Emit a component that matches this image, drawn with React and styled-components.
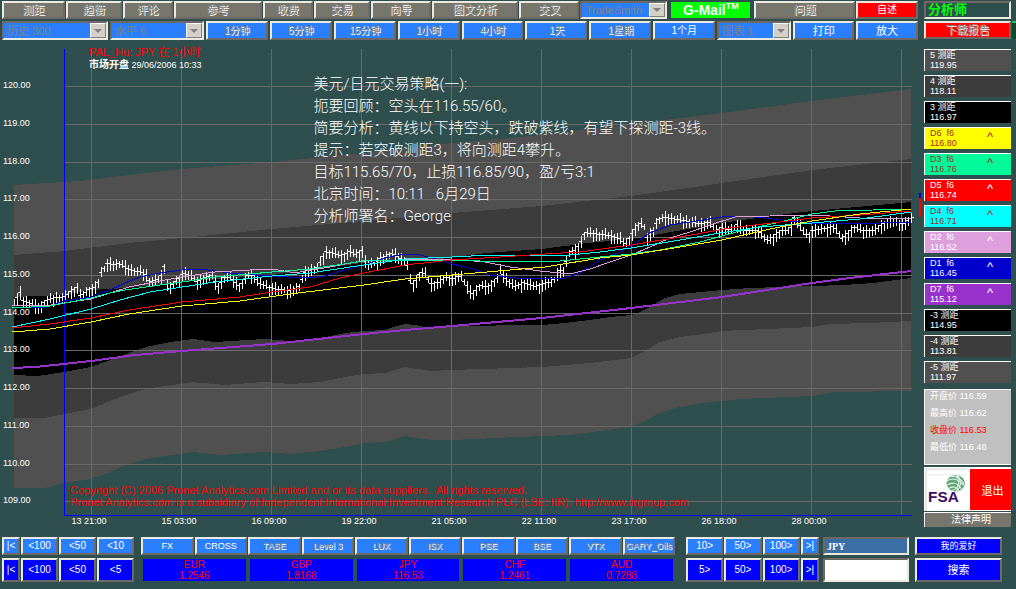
import React from "react";
import styled, { createGlobalStyle, css } from "styled-components";

const TOP_TABS = [
  { label: "测距", size: 63 },
  { label: "趋衡", size: 56 },
  { label: "评论", size: 50 },
  { label: "参考", size: 88 },
  { label: "收费", size: 50 },
  { label: "交易", size: 56 },
  { label: "向导", size: 60 },
  { label: "图文分析", size: 87 },
  { label: "交叉", size: 60 },
];

const PERIODS = [
  "1分钟",
  "5分钟",
  "15分钟",
  "1小时",
  "4小时",
  "1天",
  "1星期",
  "1个月",
];

const LEVELS = [
  { name: "5 测距", value: "119.95", bg: "#505050" },
  { name: "4 测距", value: "118.11", bg: "#3c3c3c" },
  { name: "3 测距", value: "116.97", bg: "#000" },
  { name: "D6  f6", value: "116.80", bg: "#ff0", color: "#a52a2a", up: true },
  { name: "D3  f6", value: "116.76", bg: "#00fa9a", color: "#a52a2a", up: true },
  { name: "D5  f6", value: "116.74", bg: "#f00", up: true },
  { name: "D4  f6", value: "116.71", bg: "#0ff", color: "#a52a2a", up: true },
  { name: "D2  f6", value: "116.52", bg: "#dda0dd", up: true },
  { name: "D1  f6", value: "116.45", bg: "#0000cd", up: true },
  { name: "D7  f6", value: "115.12", bg: "#9932cc", up: true },
  { name: "-3 测距", value: "114.95", bg: "#000" },
  { name: "-4 测距", value: "113.81", bg: "#3c3c3c" },
  { name: "-5 测距", value: "111.97", bg: "#505050" },
];

const PRICES = [
  { name: "开盘价", value: "116.59" },
  { name: "最高价", value: "116.62" },
  { name: "收盘价", value: "116.53", active: true },
  { name: "最低价", value: "116.48" },
];

const MARKETS = [
  { label: "FX" },
  { label: "CROSS" },
  { label: "TASE", off: true },
  { label: "Level 3", off: true },
  { label: "LUX", off: true },
  { label: "ISX", off: true },
  { label: "PSE", off: true },
  { label: "BSE", off: true },
  { label: "VTX", off: true },
  { label: "GARY_Oils", off: true },
];

const QUOTES = [
  { name: "EUR", value: "1.2546" },
  { name: "GBP", value: "1.8168" },
  { name: "JPY", value: "116.53" },
  { name: "CHF", value: "1.2461" },
  { name: "AUD", value: "0.7288" },
];

const COMMENTARY = [
  "美元/日元交易策略(一):",
  "扼要回顾：空头在116.55/60。",
  "简要分析：黄线以下持空头，跌破紫线，有望下探测距-3线。",
  "提示：若突破测距3，将向测距4攀升。",
  "目标115.65/70，止损116.85/90，盈/亏3:1",
  "北京时间：10:11   6月29日",
  "分析师署名：George",
];

const TIMES = [
  "13 21:00",
  "15 03:00",
  "16 09:00",
  "19 22:00",
  "21 05:00",
  "22 11:00",
  "23 17:00",
  "26 18:00",
  "28 00:00",
];

// chart bands, drawn from the widest to the narrowest
const OUTER_BAND =
  "14,185 64,182 90,180 129,175 182,169 272,162 364,153 452,143 542,135 631,124 722,113 812,101 911,89 " +
  "911,391 835,392 812,396 740,399 722,401 700,403 675,408 660,413 645,421 631,427 600,431 570,435 542,436 452,440 430,440 405,436 385,442 364,443 345,447 320,451 290,454 264,452 220,455 193,452 165,456 146,459 129,464 110,472 91,479 64,483 45,488 14,488";
const MIDDLE_BAND =
  "14,255 64,251 129,243 182,238 272,229 364,221 452,213 542,206 631,196 722,183 812,170 911,159 " +
  "911,321 870,323 830,324 812,327 722,331 680,337 660,342 645,351 631,358 590,363 542,367 452,370 430,371 405,367 385,373 364,374 345,377 320,382 290,384 264,382 225,385 193,382 165,386 146,389 129,394 110,401 91,409 64,414 45,418 14,418";
const INNER_BAND =
  "14,297 64,295 91,290 127,288 176,283 182,282 272,275 362,263 440,259 487,253 542,249 565,246 587,243 631,239 660,234 722,223 770,216 812,211 911,202 " +
  "911,278 873,283 843,285 812,286 750,288 722,290 680,294 665,298 650,307 640,312 631,315 610,317 590,320 565,323 542,325 452,326 430,328 415,325 405,324 393,327 385,330 364,331 345,333 320,338 290,341 264,339 215,342 193,339 170,342 146,347 129,353 110,360 91,367 64,372 38,376 14,375";

const AVERAGES = [
  {
    color: "#0000cd",
    points:
      "12,308 45,307 64,301 91,297 110,290 125,283 140,277 160,273 182,270 200,269 215,271 230,273 255,275 290,277 310,278 325,276 345,270 364,265 385,258 405,254 420,255 440,260 452,264 470,268 490,275 515,278 545,279 565,278 580,273 600,260 620,252 631,246 650,233 670,225 690,222 722,217 745,216 765,218 790,221 812,223 840,224 880,223 911,222",
  },
  {
    color: "#dda0dd",
    points:
      "12,305 45,306 64,303 91,299 110,293 129,287 160,281 182,277 215,272 250,270 272,269 290,272 300,272 330,267 361,261 400,260 452,259 485,262 510,267 540,271 570,274 590,269 610,262 631,255 650,247 670,238 690,232 710,225 735,217 770,216 800,215 830,216 860,218 911,218",
  },
  {
    color: "#00fa9a",
    points:
      "12,308 50,306 91,298 110,293 125,290 160,285 182,282 215,277 272,272 310,269 330,266 364,261 400,260 452,260 480,261 560,261 600,257 631,254 660,250 700,242 740,231 780,222 812,214 835,211 911,209",
  },
  {
    color: "#0ff",
    points:
      "12,327 50,319 91,309 120,300 150,292 182,287 215,282 272,276 310,273 364,265 385,262 405,259 452,257 490,255 570,255 600,252 631,248 680,240 720,233 760,227 812,223 860,219 911,212",
  },
  {
    color: "#f00",
    points:
      "12,328 50,324 91,318 129,310 182,302 240,297 272,292 310,287 340,278 364,273 405,265 452,260 500,257 545,254 580,252 631,245 680,237 730,228 780,222 812,218 860,215 911,211",
  },
  {
    color: "#ff0",
    points:
      "12,332 50,329 91,322 129,314 182,306 240,301 290,294 364,285 405,279 452,275 545,267 600,258 631,255 680,247 722,240 770,229 812,221 860,214 911,209",
  },
  {
    color: "#9932cc",
    width: 2,
    points:
      "12,368 35,367 64,364 91,361 135,355 182,351 272,344 364,334 405,330 452,326 542,318 631,308 722,297 812,283 850,278 911,271",
  },
];

const PRICE_PATH = [
  [14, 301], [20, 292], [22, 300], [30, 302], [40, 307], [46, 300], [55, 297],
  [64, 297], [70, 292], [77, 287], [80, 295], [85, 293], [90, 288], [97, 287],
  [100, 273], [108, 262], [115, 265], [118, 262], [125, 266], [133, 270],
  [145, 272], [150, 282], [160, 278], [164, 266], [168, 290], [173, 284],
  [180, 277], [183, 273], [190, 274], [197, 281], [205, 277], [212, 275],
  [218, 286], [225, 276], [232, 278], [240, 286], [248, 275], [254, 275],
  [260, 283], [270, 287], [280, 289], [292, 290], [300, 285], [304, 272],
  [317, 267], [322, 258], [326, 251], [335, 253], [342, 255], [350, 251],
  [357, 254], [362, 250], [366, 265], [375, 262], [382, 257], [393, 253],
  [400, 257], [406, 260], [410, 280], [414, 284], [420, 272], [425, 273],
  [430, 283], [440, 282], [445, 277], [455, 278], [460, 275], [465, 282],
  [472, 294], [480, 285], [490, 286], [497, 278], [500, 270], [505, 277],
  [515, 286], [525, 282], [535, 286], [545, 283], [553, 281], [558, 270],
  [565, 270], [567, 252], [575, 250], [580, 243], [585, 232], [600, 234],
  [612, 235], [620, 238], [626, 243], [632, 233], [638, 225], [643, 222],
  [647, 237], [653, 230], [658, 219], [665, 217], [685, 220], [700, 223],
  [710, 222], [716, 230], [722, 227], [730, 230], [737, 224], [745, 230],
  [760, 230], [765, 238], [770, 240], [775, 235], [782, 230], [790, 230],
  [794, 217], [800, 225], [807, 236], [812, 230], [830, 227], [835, 226],
  [842, 238], [848, 233], [855, 226], [862, 230], [875, 230], [885, 222],
  [895, 222], [905, 223], [912, 217],
];

const priceAt = (x) => {
  const i = PRICE_PATH.findIndex((p) => p[0] >= x);
  if (i <= 0) return PRICE_PATH[0][1];
  const [x0, y0] = PRICE_PATH[i - 1];
  const [x1, y1] = PRICE_PATH[i];
  return y0 + ((y1 - y0) * (x - x0)) / (x1 - x0);
};

// one open-high-low-close bar every three units
const priceBars = () => {
  let d = "";
  for (let i = 0; 14 + i * 3 <= 911; i += 1) {
    const x = 14 + i * 3;
    const y = Math.round(priceAt(x));
    const high = y - 3 - ((i * 7) % 5);
    const low = y + 3 + ((i * 11) % 6);
    const open = y + ((i * 5) % 4) - 2;
    const close = Math.round(priceAt(Math.min(x + 3, 912)));
    d += `M${x} ${high}V${low}M${x - 1} ${open}h1M${x} ${close}h2`;
  }
  return d;
};

const BARS = priceBars();
const gridY = (i) => Math.round(86 + i * 37.77);

function Picker({ label, size, name }) {
  return (
    <PickerBox size={size}>
      <select aria-label={name} disabled defaultValue={label}>
        <option>{label}</option>
      </select>
      <Arrow aria-hidden="true" />
    </PickerBox>
  );
}

function Chart() {
  return (
    <ChartBox>
      <svg viewBox="0 40 922 488" role="img" aria-label="JPY 1小时">
        <g shapeRendering="crispEdges">
          <polygon points={OUTER_BAND} fill="#505050" />
          <polygon points={MIDDLE_BAND} fill="#3c3c3c" />
          <polygon points={INNER_BAND} fill="#000" />
          <g stroke="#696969">
            {Array.from({ length: 12 }, (_, i) => (
              <path key={i} d={`M64 ${gridY(i) + 0.5}H912`} />
            ))}
            {Array.from({ length: 10 }, (_, i) => (
              <path key={i} d={`M${91.5 + i * 90} 49V515`} />
            ))}
          </g>
          <rect x="64" y="49" width="1" height="467" fill="#00f" />
          <rect x="64" y="515" width="848" height="1" fill="#00f" />
        </g>
        <AxisText>
          {Array.from({ length: 12 }, (_, i) => (
            <text key={i} x="3" y={gridY(i) + 2}>
              {`${120 - i}.00`}
            </text>
          ))}
          {TIMES.map((time, i) => (
            <text key={time} x={89 + i * 90} y="524" textAnchor="middle">
              {time}
            </text>
          ))}
        </AxisText>
        <g shapeRendering="crispEdges" fill="none">
          <path d={BARS} stroke="#fff" transform="translate(0.5 0.5)" />
          {AVERAGES.map((line) => (
            <polyline
              key={line.color}
              points={line.points}
              stroke={line.color}
              strokeWidth={line.width || 1}
            />
          ))}
          <path d="M920 193V198" stroke="#00f" strokeWidth="2" />
          <path d="M920 198V217" stroke="#f00" strokeWidth="2" />
        </g>
        <Notice>
          <text x="70" y="494" xmlSpace="preserve">
            Copyright (C) 2006 Pronet Analytics.com Limited and or its data
            suppliers.{"  "}All rights reserved.
          </text>
          <text x="70" y="506">
            Pronet Analytics.com is a subsidiary of Independent International
            Investment Research PLC (LSE: IIR). http://www.iirgroup.com
          </text>
        </Notice>
      </svg>
      <Title>
        <b>PAL_Hu: JPY 在 1小时</b>
        <p>
          <strong>市场开盘</strong> 29/06/2006 10:33
        </p>
      </Title>
      <Commentary>
        {COMMENTARY.map((line) => (
          <p key={line}>{line}</p>
        ))}
      </Commentary>
    </ChartBox>
  );
}

function FsaLogo() {
  return (
    <svg viewBox="0 0 43 43" role="img" aria-label="FSA">
      <path d="M2 43V2H42" fill="none" stroke="#d4d0c8" />
      <path d="M2 7.5H41" stroke="#e8e8e8" />
      <ellipse cx="31" cy="16" rx="9" ry="8" fill="#5fa777" />
      <path
        d="M22 14q8-6 17 4M22 18q9-6 15 4M24 21q6-4 10 2M26 9q10 0 13 8M27 23q10-2 5-15M31 24q8-6 2-16"
        fill="none"
        stroke="#e6f3ea"
      />
      <text x="4" y="34">
        FSA
      </text>
    </svg>
  );
}

function App() {
  return (
    <Page>
      <GlobalStyle />
      <Upper>
        <Main>
          <Toolbar>
            <Row gap={1}>
              {TOP_TABS.map((tab) => (
                <Button key={tab.label} size={tab.size} bg="#77766c" disabled>
                  {tab.label}
                </Button>
              ))}
              <Picker name="交易系统" label="TradeSmith" size={87} />
              <Mail href="#mail">
                G-Mail<sup>TM</sup>
              </Mail>
              <Button size={101} bg="#77766c" disabled>
                问题
              </Button>
              <Button size={62} bg="#f00" text={10}>
                自述
              </Button>
            </Row>
            <Row height={19}>
              <Picker name="历史" label="历史 300" size={106} />
              <Picker name="水平" label="水平 6" size={94} />
              {PERIODS.map((period) => (
                <Button
                  key={period}
                  size={62}
                  text={10}
                  disabled={period !== "1个月"}
                >
                  {period}
                </Button>
              ))}
              <Picker name="图表" label="图表 1" size={74} />
              <Button size={61}>打印</Button>
              <Button size={62}>放大</Button>
            </Row>
          </Toolbar>
          <Chart />
        </Main>
        <Side>
          <Analyst>分析师</Analyst>
          <ReportRow>
            <Button bg="#f00" disabled>
              下载报告
            </Button>
            <Edge />
          </ReportRow>
          {LEVELS.map((level) => (
            <Level key={level.name} bg={level.bg} color={level.color}>
              <span>{level.name}</span>
              {level.up && <Caret>^</Caret>}
              <div>{level.value}</div>
            </Level>
          ))}
          <Prices>
            {PRICES.map((price) => (
              <Price key={price.name} active={price.active}>
                {price.name} {price.value}
              </Price>
            ))}
          </Prices>
          <Brand>
            <FsaLogo />
            <Exit>退出</Exit>
          </Brand>
          <Legal>法律声明</Legal>
        </Side>
      </Upper>
      <Bottom>
        <Stack>
          <Nav>
            <Button size={18}>|&lt;</Button>
            <Button size={37}>&lt;100</Button>
            <Button size={37}>&lt;50</Button>
            <Button size={37}>&lt;10</Button>
          </Nav>
          <Nav>
            <Button size={18} bg="#00f">|&lt;</Button>
            <Button size={37} bg="#00f">&lt;100</Button>
            <Button size={37} bg="#00f">&lt;50</Button>
            <Button size={37} bg="#00f">&lt;5</Button>
          </Nav>
        </Stack>
        <MarketStack>
          <MarketRow>
            {MARKETS.map((market) => (
              <Button key={market.label} size={50} text={9} disabled={market.off}>
                {market.label}
              </Button>
            ))}
          </MarketRow>
          <QuoteRow>
            {QUOTES.map((quote) => (
              <Quote key={quote.name}>
                <div>{quote.name}</div>
                <div>{quote.value}</div>
              </Quote>
            ))}
          </QuoteRow>
        </MarketStack>
        <Stack>
          <Nav>
            <Button size={37}>10&gt;</Button>
            <Button size={37}>50&gt;</Button>
            <Button size={37}>100&gt;</Button>
            <Button size={18}>&gt;|</Button>
          </Nav>
          <Nav>
            <Button size={37} bg="#00f">5&gt;</Button>
            <Button size={37} bg="#00f">50&gt;</Button>
            <Button size={37} bg="#00f">100&gt;</Button>
            <Button size={18} bg="#00f">&gt;|</Button>
          </Nav>
        </Stack>
        <Stack>
          <Field aria-label="货币" defaultValue="JPY" filled />
          <Field aria-label="搜索" />
        </Stack>
        <Actions>
          <Button bg="#00f" text={9}>我的爱好</Button>
          <Button bg="#00f">搜索</Button>
        </Actions>
      </Bottom>
    </Page>
  );
}

const GlobalStyle = createGlobalStyle`
  * {
    box-sizing: border-box;
  }

  body {
    margin: 0;
    background: #2f4f4f;
    color: #fff;
    font-family: "Liberation Sans", "Noto Sans CJK SC", sans-serif;
    font-size: 11px;
  }

  p {
    margin: 0;
  }

  button,
  input,
  select {
    font-family: inherit;
    font-size: 11px;
  }
`;

const raised = css`
  border: 2px solid;
  border-color: #ece9e0 #6e6964 #6e6964 #ece9e0;
`;

const sunken = css`
  border: 2px solid;
  border-color: #6e6964 #ece9e0 #ece9e0 #6e6964;
`;

const Page = styled.div`
  display: flex;
  flex-direction: column;
  min-height: 100vh;
`;

const Upper = styled.div`
  display: flex;
`;

const Main = styled.div`
  flex: 1;
  min-width: 0;
`;

const Toolbar = styled.div`
  display: grid;
  gap: 2px;
  padding: 1px 4px 0 2px;
`;

const Row = styled.div`
  display: flex;
  gap: ${({ gap }) => gap || 2}px;
  height: ${({ height }) => height || 18}px;
`;

const Button = styled.button`
  ${raised}
  flex: 1 1 ${({ size }) => size || 60}px;
  min-width: 0;
  padding: 0;
  overflow: hidden;
  background: ${({ bg }) => bg || "#2a7fff"};
  color: #fff;
  font-size: ${({ text }) => text || 11}px;
  line-height: 12px;
  white-space: nowrap;

  &:disabled {
    color: #8c8c84;
    text-shadow: 1px 1px #fff;
  }
`;

const PickerBox = styled.div`
  ${sunken}
  display: flex;
  flex: 1 1 ${({ size }) => size}px;
  min-width: 0;
  background: #2a7fff;

  select {
    flex: 1;
    min-width: 0;
    padding: 0 0 0 3px;
    border: 0;
    appearance: none;
    background: none;
    color: #808080;
    opacity: 1;
    font-size: 11px;
    line-height: 14px;
  }
`;

const Arrow = styled.span`
  display: flex;
  align-items: center;
  justify-content: center;
  width: 16px;
  border: 1px solid;
  border-color: #fff #808080 #808080 #fff;
  background: #d4d0c8;

  &::after {
    content: "";
    border: 4px solid transparent;
    border-top-color: #808080;
    border-bottom: 0;
  }
`;

const Mail = styled.a`
  flex: 1 1 79px;
  margin: 1px 3px;
  background: #0f0;
  color: #fff;
  font-size: 14px;
  font-weight: bold;
  line-height: 16px;
  text-align: center;
  text-decoration: none;

  sup {
    font-size: 9px;
    line-height: 1px;
  }
`;

const ChartBox = styled.div`
  position: relative;

  svg {
    display: block;
    width: 100%;
  }
`;

const AxisText = styled.g`
  fill: #fff;
  font-size: 9px;
`;

const Notice = styled.g`
  fill: #f00;
  font-size: 11px;
`;

const Title = styled.div`
  position: absolute;
  top: 7px;
  left: 89px;
  font-size: 9px;
  line-height: 11px;

  b {
    color: #f00;
    font-size: 11px;
    font-weight: normal;
  }

  strong {
    font-size: 10px;
  }
`;

const Commentary = styled.div`
  position: absolute;
  top: 33px;
  left: 34%;
  font-family: Roboto, "Noto Sans CJK SC", sans-serif;
  font-size: 15px;
  font-weight: 300;
  line-height: 22px;
  white-space: pre;
`;

const Side = styled.aside`
  display: flex;
  flex: 0 0 94px;
  flex-direction: column;
  padding: 1px 5px 0 2px;
`;

const Analyst = styled.div`
  ${sunken}
  height: 18px;
  padding: 0 2px;
  color: #0f0;
  font-size: 13px;
  font-weight: bold;
  line-height: 14px;
`;

const ReportRow = styled.div`
  display: flex;
  gap: 1px;
  height: 18px;
  margin: 2px -5px 10px 0;
`;

const Edge = styled.div`
  width: 4px;
  border-top: 2px solid #3cb371;
  background: #0b4a2a;
`;

const Level = styled.div`
  display: grid;
  grid-template-columns: 57px 1fr;
  grid-template-rows: 10px 10px;
  height: 22px;
  margin-bottom: 4px;
  padding-left: 5px;
  border-top: 1px solid #fff;
  border-left: 1px solid #fff;
  background: ${({ bg }) => bg};
  color: ${({ color }) => color || "#fff"};
  font-size: 9px;
  line-height: 10px;
  white-space: pre;

  div {
    grid-row: 2;
    grid-column: 1;
  }
`;

const Caret = styled.span`
  grid-row: 1 / span 2;
  grid-column: 2;
  font-size: 13px;
  line-height: 18px;
`;

const Prices = styled.div`
  display: grid;
  grid-auto-rows: 14px;
  gap: 3px;
  height: 76px;
  margin: 2px 0;
  padding-left: 5px;
  border: 1px solid #fff;
  border-right: 0;
  background: #c0c0c0;
`;

const Price = styled.div`
  color: ${({ active }) => (active ? "#f00" : "#fff")};
  font-size: 9px;
  line-height: 12px;
`;

const Brand = styled.div`
  display: grid;
  grid-template-columns: 43px 1fr;
  gap: 1px;
  height: 44px;

  svg {
    height: 44px;
    background: #fff;
  }

  text {
    fill: #3b0a63;
    font-size: 15px;
    font-weight: bold;
  }
`;

const Exit = styled.button`
  padding: 0 0 0 4px;
  border: solid #fff;
  border-width: 2px 0 1px 2px;
  background: #f00;
  color: #fff;
`;

const Legal = styled.button`
  height: 15px;
  margin-top: 1px;
  padding: 0 0 0 6px;
  border: solid #fff;
  border-width: 1px 0 0 1px;
  background: #77766c;
  color: #fff;
  font-size: 10px;
  line-height: 14px;
`;

const Bottom = styled.footer`
  display: grid;
  grid-template-columns: 132fr 544fr 133fr 86fr 89fr;
  gap: 4px;
  padding: 9px 14px 7px 2px;
`;

const Stack = styled.div`
  display: grid;
  grid-template-rows: 18px 24px;
  gap: 3px;
  min-width: 0;
`;

const MarketStack = styled(Stack)`
  padding: 0 7px 0 3px;
`;

const Actions = styled(Stack)`
  padding-left: 2px;
`;

const Nav = styled.div`
  display: flex;
  gap: 1px;

  button {
    font-size: 10px;
  }
`;

const MarketRow = styled.div`
  display: flex;
  gap: 1px;
`;

const QuoteRow = styled.div`
  display: grid;
  grid-template-columns: repeat(5, 1fr);
  gap: 4px;
  padding: 1px 2px;
`;

const Quote = styled.div`
  background: #00f;
  color: #f00;
  font-size: 10px;
  line-height: 11px;
  text-align: center;
`;

const Field = styled.input`
  ${sunken}
  width: 100%;
  min-width: 0;
  padding: 0 2px;
  background: ${({ filled }) => (filled ? "#3a6ea5" : "#fff")};
  color: ${({ filled }) => (filled ? "#fff" : "#000")};
  font-family: "Liberation Serif", serif;
  font-size: 10px;
  font-weight: bold;
`;

export default App;
